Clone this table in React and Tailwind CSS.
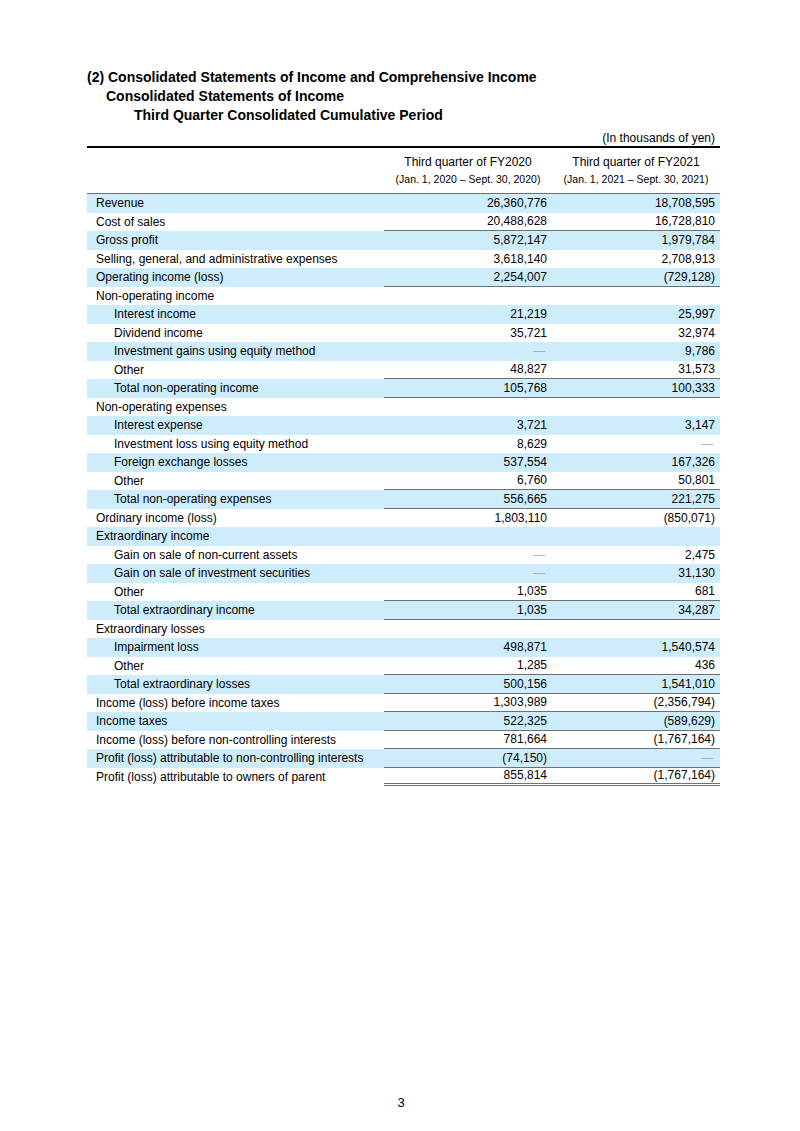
const rows = [
  ["Revenue", 0, "26,360,776", "18,708,595", ""],
  ["Cost of sales", 0, "20,488,628", "16,728,810", "b"],
  ["Gross profit", 0, "5,872,147", "1,979,784", ""],
  ["Selling, general, and administrative expenses", 0, "3,618,140", "2,708,913", ""],
  ["Operating income (loss)", 0, "2,254,007", "(729,128)", "b"],
  ["Non-operating income", 0, "", "", ""],
  ["Interest income", 1, "21,219", "25,997", ""],
  ["Dividend income", 1, "35,721", "32,974", ""],
  ["Investment gains using equity method", 1, "-", "9,786", ""],
  ["Other", 1, "48,827", "31,573", "b"],
  ["Total non-operating income", 1, "105,768", "100,333", "b"],
  ["Non-operating expenses", 0, "", "", ""],
  ["Interest expense", 1, "3,721", "3,147", ""],
  ["Investment loss using equity method", 1, "8,629", "-", ""],
  ["Foreign exchange losses", 1, "537,554", "167,326", ""],
  ["Other", 1, "6,760", "50,801", "b"],
  ["Total non-operating expenses", 1, "556,665", "221,275", "b"],
  ["Ordinary income (loss)", 0, "1,803,110", "(850,071)", ""],
  ["Extraordinary income", 0, "", "", ""],
  ["Gain on sale of non-current assets", 1, "-", "2,475", ""],
  ["Gain on sale of investment securities", 1, "-", "31,130", ""],
  ["Other", 1, "1,035", "681", "b"],
  ["Total extraordinary income", 1, "1,035", "34,287", "b"],
  ["Extraordinary losses", 0, "", "", ""],
  ["Impairment loss", 1, "498,871", "1,540,574", ""],
  ["Other", 1, "1,285", "436", "b"],
  ["Total extraordinary losses", 1, "500,156", "1,541,010", "b"],
  ["Income (loss) before income taxes", 0, "1,303,989", "(2,356,794)", "b"],
  ["Income taxes", 0, "522,325", "(589,629)", "b"],
  ["Income (loss) before non-controlling interests", 0, "781,664", "(1,767,164)", "b"],
  ["Profit (loss) attributable to non-controlling interests", 0, "(74,150)", "-", "b"],
  ["Profit (loss) attributable to owners of parent", 0, "855,814", "(1,767,164)", "d"],
];

function Cell({ value, line }) {
  const border =
    line === "b"
      ? "border-b border-[#707070]"
      : line === "d"
      ? "border-b-[3px] border-double border-[#707070]"
      : "";
  return (
    <div className={`w-[168px] h-full flex items-center justify-end pr-[5px] ${border}`}>
      {value === "-" ? (
        <span className="text-[#b0b0b0] pr-[2px]">―</span>
      ) : (
        value
      )}
    </div>
  );
}

export default function App() {
  return (
    <div
      className="w-[800px] h-[1131px] bg-white text-black flex flex-col"
      style={{ fontFamily: '"Liberation Sans", Arial, sans-serif' }}
    >
      <div className="pl-[87px] pt-[68px] font-bold text-[14px] leading-[19px]">
        <div>(2) Consolidated Statements of Income and Comprehensive Income</div>
        <div className="pl-[19px]">Consolidated Statements of Income</div>
        <div className="pl-[47px]">Third Quarter Consolidated Cumulative Period</div>
      </div>

      <div className="ml-[87px] w-[633px] mt-[5px] text-[12px]">
        <div className="text-right pr-[5px] leading-[16px] h-[16px]">(In thousands of yen)</div>
        <div className="h-[2px] bg-black" />
        <div className="flex h-[46px] border-b border-[#707070]">
          <div className="w-[297px]" />
          <div className="w-[168px] flex flex-col items-center justify-center">
            <div className="leading-[15px] text-[12px]">Third quarter of FY2020</div>
            <div className="leading-[15px] text-[10.5px] mt-[2px]">(Jan. 1, 2020 – Sept. 30, 2020)</div>
          </div>
          <div className="w-[168px] flex flex-col items-center justify-center">
            <div className="leading-[15px] text-[12px]">Third quarter of FY2021</div>
            <div className="leading-[15px] text-[10.5px] mt-[2px]">(Jan. 1, 2021 – Sept. 30, 2021)</div>
          </div>
        </div>

        {rows.map(([label, indent, v1, v2, line], i) => (
          <div
            key={i}
            className={`flex h-[18.5px] leading-[14px] ${i % 2 === 0 ? "bg-[#cdedfc]" : ""}`}
          >
            <div
              className={`w-[297px] h-full flex items-center ${indent ? "pl-[27px]" : "pl-[9px]"}`}
            >
              {label}
            </div>
            <Cell value={v1} line={line} />
            <Cell value={v2} line={line} />
          </div>
        ))}
      </div>

      <div className="mt-auto mb-[19px] text-center text-[13px] pl-[2px]">3</div>
    </div>
  );
}
